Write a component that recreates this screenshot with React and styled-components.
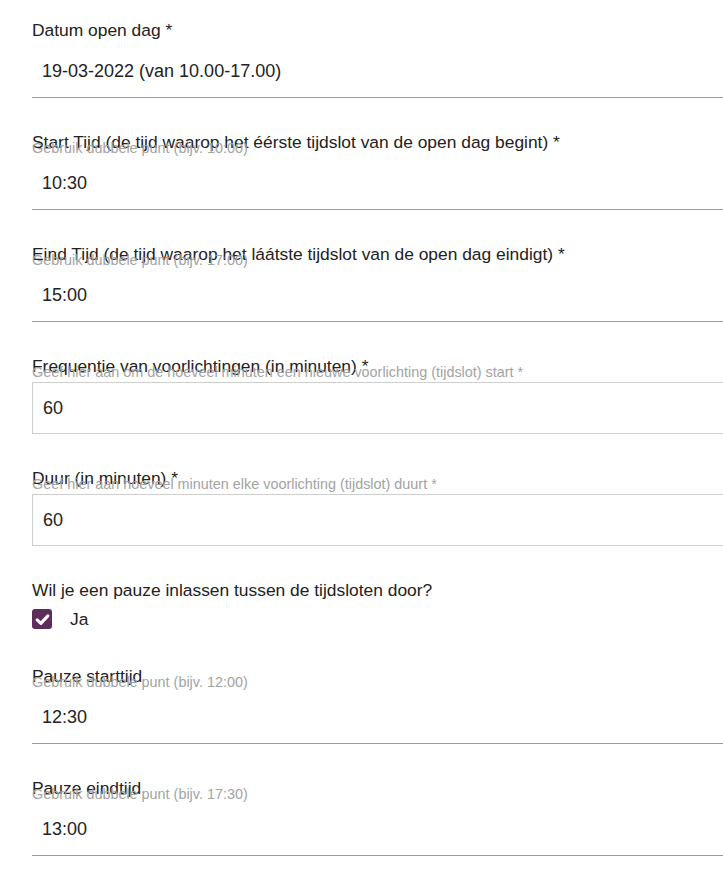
import React, { useState } from 'react';
import styled, { createGlobalStyle } from 'styled-components';

const GlobalStyle = createGlobalStyle`
html, body {
    margin: 0;
    padding: 0;
    background: #ffffff;
    overflow: hidden;
    font-family: "Liberation Sans", Arial, sans-serif;
    color: #222;
}
`

const fields = [
    { label: 'Datum open dag *', value: '19-03-2022 (van 10.00-17.00)' },
    { label: 'Start Tijd (de tijd waarop het éérste tijdslot van de open dag begint) *', hint: 'Gebruik dubbele punt (bijv. 10:00)', value: '10:30' },
    { label: 'Eind Tijd (de tijd waarop het láátste tijdslot van de open dag eindigt) *', hint: 'Gebruik dubbele punt (bijv. 17:00)', value: '15:00' },
    { label: 'Frequentie van voorlichtingen (in minuten) *', hint: 'Geef hier aan om de hoeveel minuten een nieuwe voorlichting (tijdslot) start *', value: '60', boxed: true },
    { label: 'Duur (in minuten) *', hint: 'Geef hier aan hoeveel minuten elke voorlichting (tijdslot) duurt *', value: '60', boxed: true },
];

const pauseFields = [
    { label: 'Pauze starttijd', hint: 'Gebruik dubbele punt (bijv. 12:00)', value: '12:30' },
    { label: 'Pauze eindtijd', hint: 'Gebruik dubbele punt (bijv. 17:30)', value: '13:00' },
];

function Field({ label, hint, value, boxed }) {
    return (
        <FieldWrap>
            <Label>{label}</Label>
            <InputWrap>
                {hint && <Hint>{hint}</Hint>}
                <Input defaultValue={value} $boxed={boxed} />
            </InputWrap>
        </FieldWrap>
    );
}

export default function App() {
    const [pause, setPause] = useState(true);

    return (
        <Form>
            <GlobalStyle />
            {fields.map((f) => <Field key={f.label} {...f} />)}

            <Question>Wil je een pauze inlassen tussen de tijdsloten door?</Question>
            <CheckRow onClick={() => setPause(!pause)}>
                <CheckBox $checked={pause}>
                    {pause && (
                        <svg width="15" height="15" viewBox="0 0 14 14">
                            <path d="M2 7.4 L5.5 10.6 L12 3.6" fill="none" stroke="#fff" strokeWidth="2.9" strokeLinecap="round" strokeLinejoin="round" />
                        </svg>
                    )}
                </CheckBox>
                <CheckLabel>Ja</CheckLabel>
            </CheckRow>

            {pause && pauseFields.map((f) => <Field key={f.label} {...f} />)}
        </Form>
    );
}

const Form = styled.div`
padding: 20px 0 0 32px;
width: 720px;
`

const FieldWrap = styled.div`
margin-bottom: 34px;
`

const Label = styled.div`
font-size: 17.4px;
line-height: 20px;
color: #222;
white-space: nowrap;
`

const InputWrap = styled.div`
position: relative;
margin-top: 6px;
`

const Hint = styled.span`
position: absolute;
left: 0;
top: -18px;
font-size: 14.4px;
line-height: 16px;
color: #a3a3a3;
white-space: nowrap;
pointer-events: none;
`

const Input = styled.input`
display: block;
box-sizing: border-box;
width: 720px;
height: 52px;
padding: 0 10px;
font-family: "Liberation Sans", Arial, sans-serif;
font-size: 18px;
color: #222;
background: transparent;
outline: none;
border: ${p => p.$boxed ? '1px solid #cfcfcf' : 'none'};
border-bottom: ${p => p.$boxed ? '1px solid #cfcfcf' : '1px solid #9a9a9a'};
border-radius: 0;
`

const Question = styled.div`
font-size: 17.4px;
line-height: 20px;
color: #222;
`

const CheckRow = styled.div`
display: flex;
align-items: center;
gap: 18px;
margin-top: 9px;
margin-bottom: 37px;
cursor: pointer;
`

const CheckBox = styled.span`
display: flex;
align-items: center;
justify-content: center;
width: 20px;
height: 20px;
border-radius: 3px;
background: ${p => p.$checked ? '#5e2d5b' : '#fff'};
border: ${p => p.$checked ? 'none' : '1px solid #999'};
box-sizing: border-box;
`

const CheckLabel = styled.span`
font-size: 17.4px;
line-height: 20px;
color: #222;
`
